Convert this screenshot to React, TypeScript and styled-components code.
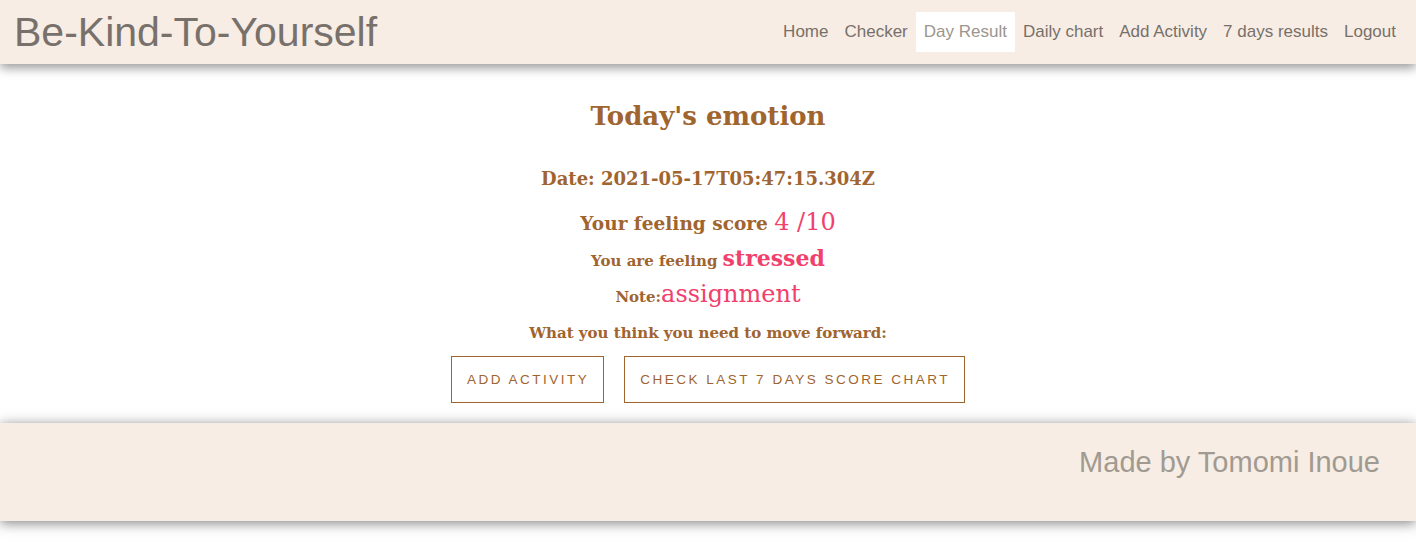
import React from "react";
import styled, { createGlobalStyle } from "styled-components";

const Global = createGlobalStyle`
  html, body { margin: 0; padding: 0; background: #ffffff; }
  body { font-family: "Liberation Sans", Arial, sans-serif; }
`;

const brown = "#a0642f";
const pink = "#f0416c";
const cream = "#f7ede5";

const Header = styled.header`
  height: 64px;
  background: ${cream};
  display: flex;
  align-items: center;
  justify-content: space-between;
  padding: 0 12px 0 14px;
  box-shadow: 0 4px 10px rgba(0, 0, 0, 0.4);
  position: relative;
  z-index: 1;
`;

const Brand = styled.div`
  font-size: 41px;
  color: #78716b;
`;

const Nav = styled.nav`
  display: flex;
  align-items: center;
`;

const NavLink = styled.a<{ $active?: boolean }>`
  font-size: 17px;
  color: ${(p) => (p.$active ? "#9c958d" : "#77706a")};
  background: ${(p) => (p.$active ? "#ffffff" : "transparent")};
  padding: 0 8px;
  height: 40px;
  display: flex;
  align-items: center;
  text-decoration: none;
`;

const Main = styled.main`
  display: flex;
  flex-direction: column;
  align-items: center;
  padding: 34px 0 20px;
  font-family: "DejaVu Serif", serif;
  font-weight: bold;
  color: ${brown};
`;

const Title = styled.h1`
  margin: 0;
  font-size: 26px;
  font-weight: bold;
  line-height: 36px;
`;

const DateLine = styled.div`
  margin-top: 32px;
  font-size: 18px;
  line-height: 26px;
`;

const Line = styled.div<{ $size: number; $mt: number }>`
  font-size: ${(p) => p.$size}px;
  margin-top: ${(p) => p.$mt}px;
  line-height: 30px;
`;

const Accent = styled.span<{ $size: number; $bold?: boolean }>`
  color: ${pink};
  font-size: ${(p) => p.$size}px;
  font-weight: ${(p) => (p.$bold ? "bold" : "normal")};
`;

const Buttons = styled.div`
  display: flex;
  gap: 20px;
  margin-top: 8px;
`;

const OutlineButton = styled.button`
  font-family: "Liberation Sans", Arial, sans-serif;
  background: transparent;
  border: 1px solid ${brown};
  color: ${brown};
  font-size: 13.5px;
  letter-spacing: 2.5px;
  height: 47px;
  padding: 0 14px 0 15px;
  text-transform: uppercase;
`;

const Footer = styled.footer`
  height: 98px;
  box-sizing: border-box;
  background: ${cream};
  display: flex;
  align-items: flex-start;
  justify-content: flex-end;
  padding: 23px 36px 0 0;
  margin-bottom: 23px;
  box-shadow: 0 2px 12px rgba(0, 0, 0, 0.5);
  position: relative;
`;

const Credit = styled.div`
  font-size: 29px;
  color: #a09a91;
`;

export default function App() {
  const links = ["Home", "Checker", "Day Result", "Daily chart", "Add Activity", "7 days results", "Logout"];
  return (
    <>
      <Global />
      <Header>
        <Brand>Be-Kind-To-Yourself</Brand>
        <Nav>
          {links.map((l) => (
            <NavLink key={l} $active={l === "Day Result"}>{l}</NavLink>
          ))}
        </Nav>
      </Header>
      <Main>
        <Title>Today's emotion</Title>
        <DateLine>Date: 2021-05-17T05:47:15.304Z</DateLine>
        <Line $size={18.5} $mt={15}>
          Your feeling score <Accent $size={24}>4 /10</Accent>
        </Line>
        <Line $size={15} $mt={4}>
          You are feeling <Accent $size={22} $bold>stressed</Accent>
        </Line>
        <Line $size={15} $mt={3}>
          Note:<Accent $size={24}>assignment</Accent>
        </Line>
        <Line $size={15} $mt={6}>What you think you need to move forward:</Line>
        <Buttons>
          <OutlineButton>Add Activity</OutlineButton>
          <OutlineButton>Check last 7 days score chart</OutlineButton>
        </Buttons>
      </Main>
      <Footer>
        <Credit>Made by Tomomi Inoue</Credit>
      </Footer>
    </>
  );
}
